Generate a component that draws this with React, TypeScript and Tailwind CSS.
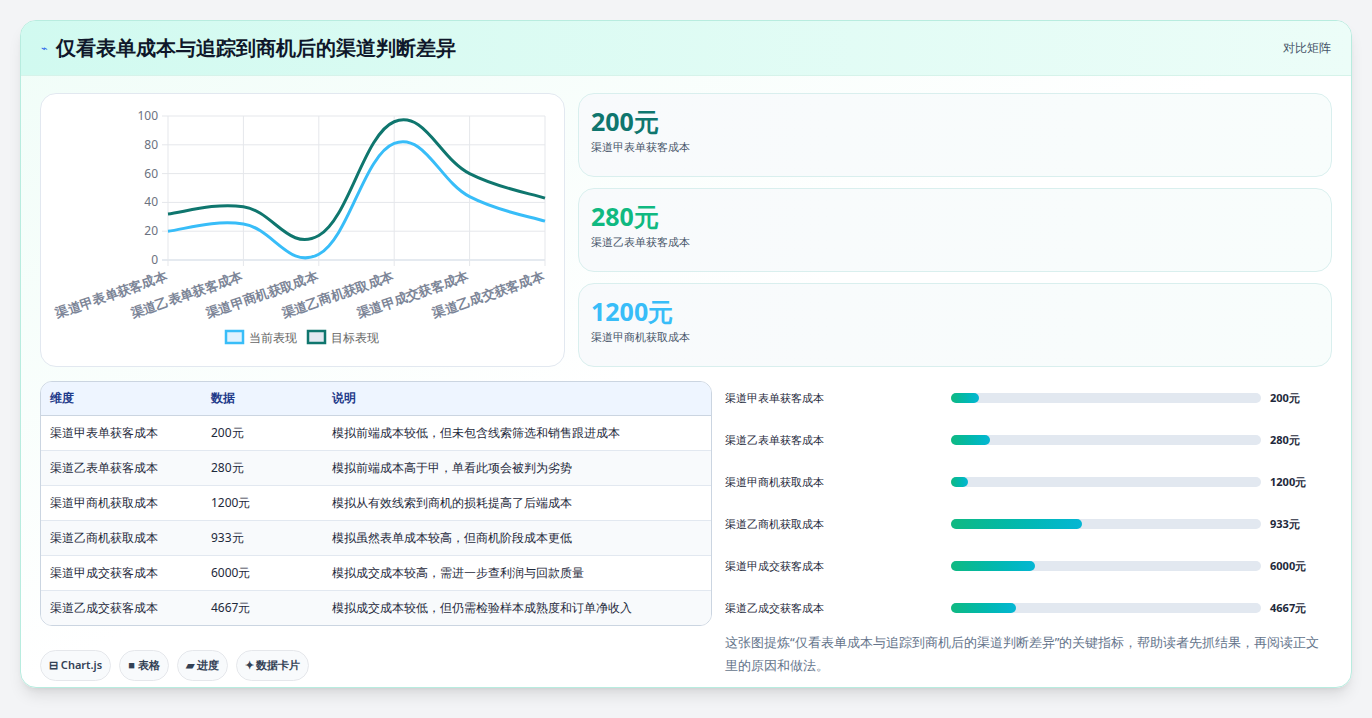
const labels = ["渠道甲表单获客成本", "渠道乙表单获客成本", "渠道甲商机获取成本", "渠道乙商机获取成本", "渠道甲成交获客成本", "渠道乙成交获客成本"];
const current = [20, 25, 4, 81, 44, 27];
const target = [32, 37, 17, 96, 60, 43];

const rows = [
  { name: "渠道甲表单获客成本", v: "200元", note: "模拟前端成本较低，但未包含线索筛选和销售跟进成本", w: 28 },
  { name: "渠道乙表单获客成本", v: "280元", note: "模拟前端成本高于甲，单看此项会被判为劣势", w: 39 },
  { name: "渠道甲商机获取成本", v: "1200元", note: "模拟从有效线索到商机的损耗提高了后端成本", w: 17 },
  { name: "渠道乙商机获取成本", v: "933元", note: "模拟虽然表单成本较高，但商机阶段成本更低", w: 131 },
  { name: "渠道甲成交获客成本", v: "6000元", note: "模拟成交成本较高，需进一步查利润与回款质量", w: 84 },
  { name: "渠道乙成交获客成本", v: "4667元", note: "模拟成交成本较低，但仍需检验样本成熟度和订单净收入", w: 65 },
];

const X0 = 127, X1 = 504, Y0 = 166, Y1 = 22;
const px = (i: number) => X0 + ((X1 - X0) / 5) * i;
const py = (v: number) => Y0 - ((Y0 - Y1) * v) / 100;

function curve(vals: number[]) {
  const pts = vals.map((v, i) => [px(i), py(v)]);
  const t = 0.2;
  let d = `M${pts[0][0]},${pts[0][1]}`;
  for (let i = 0; i < pts.length - 1; i++) {
    const p0 = pts[i - 1] || pts[i];
    const p1 = pts[i];
    const p2 = pts[i + 1];
    const p3 = pts[i + 2] || p2;
    const c1 = [p1[0] + (p2[0] - p0[0]) * t, p1[1] + (p2[1] - p0[1]) * t];
    const c2 = [p2[0] - (p3[0] - p1[0]) * t, p2[1] - (p3[1] - p1[1]) * t];
    d += ` C${c1[0]},${c1[1]} ${c2[0]},${c2[1]} ${p2[0]},${p2[1]}`;
  }
  return d;
}

function Chart() {
  return (
    <svg width="524" height="273" viewBox="0 0 524 273" className="block">
      {[0, 20, 40, 60, 80, 100].map((v) => (
        <g key={v}>
          <line x1={X0 - 6} x2={X1} y1={py(v)} y2={py(v)} stroke={v === 0 ? "#cbd5e1" : "#e5e7eb"} />
          <text x={X0 - 10} y={py(v) + 4} textAnchor="end" fontSize="12" fill="#6b7280">{v}</text>
        </g>
      ))}
      {labels.map((l, i) => (
        <g key={l}>
          <line x1={px(i)} x2={px(i)} y1={Y1} y2={Y0 + 6} stroke="#e5e7eb" />
          <text x={px(i)} y={Y0 + 20} textAnchor="end" fontSize="13" fontWeight="700" fill="#7c8597" transform={`rotate(-19 ${px(i)} ${Y0 + 20})`}>{l}</text>
        </g>
      ))}
      <path d={curve(current)} fill="none" stroke="#38bdf8" strokeWidth="3" />
      <path d={curve(target)} fill="none" stroke="#0f766e" strokeWidth="3" />
      <rect x="185" y="237" width="17" height="12" fill="#e0f2fe" stroke="#38bdf8" strokeWidth="2.5" />
      <text x="208" y="248" fontSize="12" fill="#666">当前表现</text>
      <rect x="267" y="237" width="17" height="12" fill="#e2e8f0" stroke="#0f766e" strokeWidth="2.5" />
      <text x="290" y="248" fontSize="12" fill="#666">目标表现</text>
    </svg>
  );
}

const metrics = [
  { v: "200元", l: "渠道甲表单获客成本", c: "text-[#0f766e]" },
  { v: "280元", l: "渠道乙表单获客成本", c: "text-[#10b981]" },
  { v: "1200元", l: "渠道甲商机获取成本", c: "text-[#38bdf8]" },
];

export default function App() {
  return (
    <div className="min-h-[718px] bg-[#f3f4f6] px-5 pt-5 font-['Noto_Sans','Noto_Sans_CJK_SC',sans-serif]">
      <div className="w-[1332px] overflow-hidden rounded-2xl border border-[#b8ecdf] bg-gradient-to-br from-[#f0fdf8] via-white to-white shadow-lg">
        <div className="flex h-[55px] items-center justify-between border-b border-[#d6f3ea] bg-gradient-to-r from-[#d1faf0] to-[#ecfdf8] px-5">
          <div className="flex items-center gap-2">
            <span className="text-[11px] text-[#2563eb]">⌁</span>
            <h1 className="text-[20px] font-bold text-[#0f172a]">仅看表单成本与追踪到商机后的渠道判断差异</h1>
          </div>
          <span className="text-xs text-[#475569]">对比矩阵</span>
        </div>
        <div className="px-[19px] pt-[17px] pb-[6px]">
          <div className="flex gap-[13px]">
            <div className="h-[274px] w-[525px] shrink-0 rounded-2xl border border-[#e2e8f0] bg-white">
              <Chart />
            </div>
            <div className="flex flex-1 flex-col gap-[11px]">
              {metrics.map((m) => (
                <div key={m.v} className="h-[84px] rounded-2xl border border-[#d9efee] bg-gradient-to-r from-[#f8fafc] to-[#f8fdfc] px-3 pt-[9px]">
                  <div className={`text-[25px] font-bold leading-[36px] ${m.c}`}>{m.v}</div>
                  <div className="text-[11px] text-[#475569]">{m.l}</div>
                </div>
              ))}
            </div>
          </div>
          <div className="mt-[14px] flex gap-[13px]">
            <div className="w-[672px] shrink-0">
              <div className="overflow-hidden rounded-xl border border-[#cbd5e1]">
                <table className="w-full text-left text-xs text-[#1e293b]">
                  <thead className="bg-[#eef5ff] text-[#1e3a8a]">
                    <tr className="h-[33px] border-b border-[#cbd5e1]">
                      <th className="w-[170px] pl-[9px] font-semibold">维度</th>
                      <th className="w-[121px] font-semibold">数据</th>
                      <th className="font-semibold">说明</th>
                    </tr>
                  </thead>
                  <tbody>
                    {rows.map((r, i) => (
                      <tr key={r.name} className={`h-[35px] border-b border-[#e2e8f0] last:border-b-0 ${i % 2 ? "bg-[#f8fafc]" : "bg-white"}`}>
                        <td className="pl-[9px]">{r.name}</td>
                        <td>{r.v}</td>
                        <td>{r.note}</td>
                      </tr>
                    ))}
                  </tbody>
                </table>
              </div>
              <div className="mt-6 flex gap-2 text-[11px] font-semibold text-[#334155]">
                <span className="rounded-full border border-[#e5e7eb] bg-[#f8fafc] px-2 py-[6px]">⊟ Chart.js</span>
                <span className="rounded-full border border-[#e5e7eb] bg-[#f8fafc] px-2 py-[6px]">■ 表格</span>
                <span className="rounded-full border border-[#e5e7eb] bg-[#f8fafc] px-2 py-[6px]">▰ 进度</span>
                <span className="rounded-full border border-[#e5e7eb] bg-[#f8fafc] px-2 py-[6px]">✦ 数据卡片</span>
              </div>
            </div>
            <div className="flex-1">
              <div className="-mt-1 flex flex-col">
                {rows.map((r) => (
                  <div key={r.name} className="flex h-[42px] items-center text-[11px] text-[#1e293b]">
                    <span className="w-[226px]">{r.name}</span>
                    <div className="h-[10px] w-[310px] rounded-full bg-[#e2e8f0]">
                      <div className="h-full rounded-full bg-gradient-to-r from-[#10b981] to-[#06b6d4]" style={{ width: r.w }} />
                    </div>
                    <span className="ml-[9px] font-bold">{r.v}</span>
                  </div>
                ))}
              </div>
              <p className="mt-[2px] pr-2 text-[13px] leading-[23px] text-[#64748b]">
                这张图提炼“仅看表单成本与追踪到商机后的渠道判断差异”的关键指标，帮助读者先抓结果，再阅读正文里的原因和做法。
              </p>
            </div>
          </div>
        </div>
      </div>
    </div>
  );
}
